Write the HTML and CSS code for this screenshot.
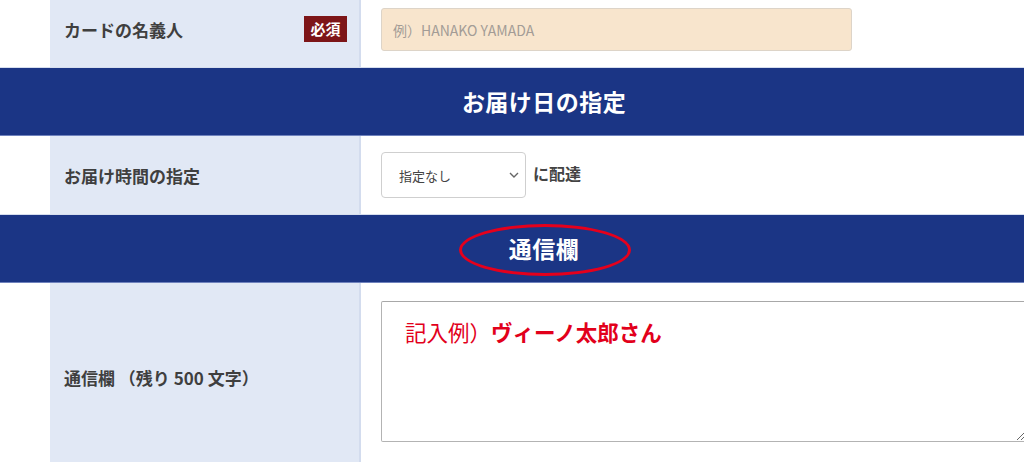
FILE: index.html
```html
<!DOCTYPE html>
<html lang="ja">
<head>
    <meta charset="UTF-8">
    <meta name="viewport" content="width=device-width, initial-scale=1.0">
    <title>ご注文情報の入力</title>
    <link rel="stylesheet" href="styles.css">
</head>
<body>
    <div class="form">
        <div class="row row-first">
            <div class="label">
                <span>カードの名義人</span>
                <span class="badge">必須</span>
            </div>
            <div class="field">
                <input class="text-input" type="text" placeholder="例）HANAKO YAMADA">
            </div>
        </div>

        <div class="section-title">お届け日の指定</div>

        <div class="row">
            <div class="label">お届け時間の指定</div>
            <div class="field">
                <div class="select-wrap">
                    <select class="select">
                        <option>指定なし</option>
                        <option>午前中</option>
                        <option>14時～16時</option>
                        <option>16時～18時</option>
                        <option>18時～20時</option>
                    </select>
                    <svg class="chevron" width="10" height="6" viewBox="0 0 10 6">
                        <path d="M1 1l4 4 4-4" fill="none" stroke="#666" stroke-width="1.4"/>
                    </svg>
                </div>
                <span class="suffix">に配達</span>
            </div>
        </div>

        <div class="section-title"><span class="circled">通信欄</span></div>

        <div class="row row-message">
            <div class="label">通信欄 （残り 500 文字）</div>
            <div class="field field-top">
                <div class="message-wrap">
                    <textarea class="message"></textarea>
                    <!-- sample text shown over the empty box -->
                    <div class="message-sample">記入例）<b>ヴィーノ太郎さん</b></div>
                </div>
            </div>
        </div>
    </div>
</body>
</html>
```

FILE: styles.css
```css
body{
    margin: 0;
    background-color: #fff;
    font-family: "Noto Sans CJK JP", "Noto Sans", sans-serif;
    color: #3f3f3f;
    overflow: hidden;
}
.form{
    margin-top: -9px;
}
.row{
    display: flex;
    padding-left: 50px;
    border-bottom: 1px solid #d6deee;
}
.label{
    width: 283px;
    flex-shrink: 0;
    padding: 0 12px 0 14px;
    background-color: #e1e8f5;
    border-right: 2px solid #d3dcee;
    display: flex;
    align-items: center;
    justify-content: space-between;
    font-size: 17px;
    font-weight: bold;
}
.badge{
    width: 43px;
    height: 26px;
    line-height: 26px;
    text-align: center;
    background-color: #7d1518;
    color: #fff;
    font-size: 15px;
}
.field{
    flex: 1;
    display: flex;
    align-items: center;
    padding: 16px 0 16px 20px;
}
.row-first .field{
    padding-top: 17px;
}
.field-top{
    align-items: flex-start;
    padding-top: 18px;
    padding-bottom: 30px;
}
.text-input{
    width: 471px;
    height: 43px;
    box-sizing: border-box;
    padding: 0 11px;
    background-color: #f8e5cd;
    border: 1px solid #ddd4c8;
    border-radius: 3px;
    font-family: inherit;
    font-size: 14px;
}
.text-input::placeholder{
    color: #a39c96;
}
.select-wrap{
    position: relative;
}
.select{
    width: 145px;
    height: 46px;
    padding: 0 17px;
    appearance: none;
    background-color: #fff;
    border: 1px solid #cfcfcf;
    border-radius: 4px;
    font-family: inherit;
    font-size: 13px;
    color: #444;
}
.chevron{
    position: absolute;
    right: 7px;
    top: 20px;
    pointer-events: none;
}
.suffix{
    margin-left: 7px;
    margin-top: -4px;
    font-size: 16px;
    font-weight: bold;
    color: #444;
}
.section-title{
    height: 67px;
    line-height: 67px;
    padding-left: 64px;
    text-align: center;
    background-color: #1b3585;
    border-bottom: 1px solid #6f82bd;
    color: #fff;
    font-size: 23px;
    font-weight: bold;
    letter-spacing: 0.02em;
}
.circled{
    position: relative;
}
.circled::after{
    content: "";
    position: absolute;
    left: -50px;
    right: -52px;
    top: -7px;
    bottom: -11px;
    border: 3px solid #e5001c;
    border-radius: 50%;
}
.row-message{
    min-height: 188px;
}
.message-wrap{
    position: relative;
}
.message{
    display: block;
    width: 645px;
    height: 141px;
    box-sizing: border-box;
    border: 1px solid #b3b3b3;
    border-top-color: #a8a8a8;
    border-radius: 2px;
    font-family: inherit;
}
.message-sample{
    position: absolute;
    left: 24px;
    top: 16px;
    font-size: 21.5px;
    line-height: 30px;
    color: #e2001b;
    pointer-events: none;
}
.message-sample b{
    font-weight: bold;
}
```
